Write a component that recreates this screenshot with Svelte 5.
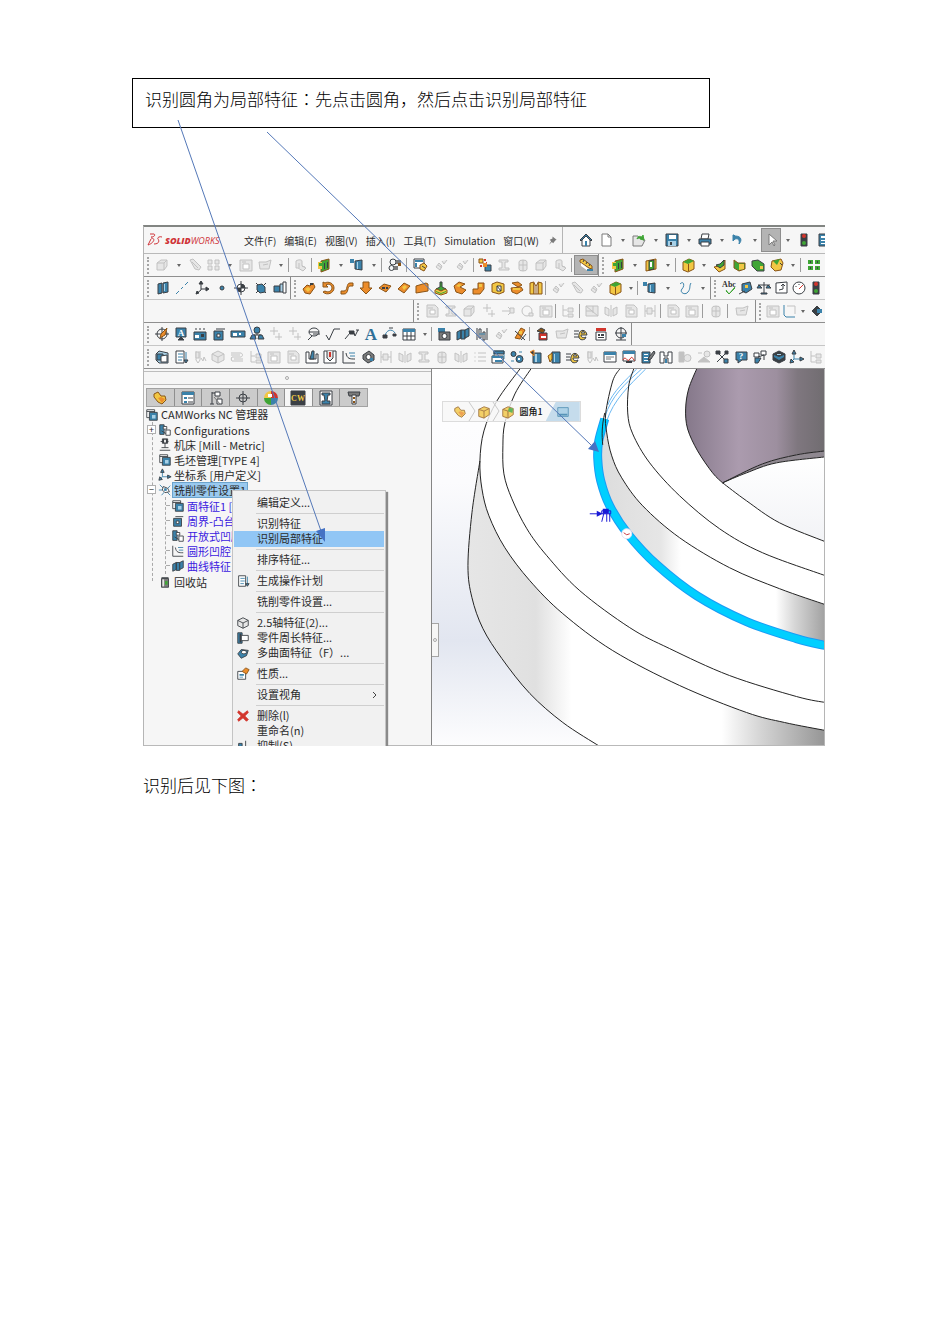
<script lang="ts">
  type Group = { span: number; edge?: 'grip' | 'line' | 'wall' | 'walled-grip'; items?: string };
  type Point = [number, number];

  const palette: Record<string, string> = {
    n: 'none', k: '#3a3f44', b: '#3b82aa', l: '#a8d0e6', o: '#ec8d2c', y: '#f2c744',
    g: '#3fa535', w: '#ffffff', s: '#c2c2c2', e: '#e6e6e6', t: '#7b7b7b', r: '#d2352c', d: '#8a5416'
  };

  // each part: fill letter, stroke letter, then path data on a 16px grid
  const icons: Record<string, string[]> = {
    home: ['bk M2 8l6-6 6 6-1 1-5-5-5 5z', 'wk M4 8v6h8V8L8 4z', 'bn M7 9h2v5H7z'],
    page: ['wt M4 2h6l3 3v9H4z', 'nt M10 2v3h3'],
    folder: ['et M2 4h5l1 2h4v2h2l-3 6H2z', 'gg M6 7c1-3 3-3 5-2l1-2 1 5-4-1 1-1c-2 0-3 0-4 1z'],
    save: ['bk M2 2h12v12H2z', 'wn M5 3h7v4H5z', 'ln M4 9h8v5H4z', 'kn M6 10h2v3H6z'],
    print: ['wk M5 2h7l-1 5H4z', 'bk M2 7h12v5H2z', 'wk M4 10h8v4H4z'],
    undo: ['bb M3 3v6l2-2c3-1 5 1 4 5 3-3 3-8-4-8l-1-1z'],
    cursor: ['wt M6 2v11l3-3 2 4 1-1-2-4h4z'],
    light: ['kk M5 2h6v12H5z', 'rn M6 4a2 2 0 1 0 4 0a2 2 0 1 0-4 0', 'gn M6 11a2 2 0 1 0 4 0a2 2 0 1 0-4 0'],
    list: ['bk M3 2h11v12H3z', 'wn M5 4h8v2H5zM5 8h8v1H5zM5 11h8v1H5z'],
    pin: ['tn M8 2l6 5-2 1-3 4-2-2-4 4 3-5-2-2 4-2z'],
    gBox: ['es M2 6l4-3h6v6l-3 4H2z', 'ns M2 6h7v7M9 6l3-3'],
    gClip: ['es M3 3l3-1 8 8-2 3-4-1z', 'ns M5 5l6 6'],
    gGrid: ['es M2 3h4v4H2zM9 3h4v4H9zM2 9h4v4H2zM9 9h4v4H9z'],
    gCam: ['es M2 3h12v11H2z', 'ws M5 7h6v5H5z', 'ns M4 5h4'],
    gFold: ['es M2 5h7l5-2-2 9H3z', 'ns M6 8l5-1'],
    gCyl: ['es M3 4c3-2 6-1 6 0v5l4 2-3 3-5-3H3z', 'ns M6 6v5M9 9l3 1'],
    gStar: ['es M3 10l3-4 3 3-2 4zM9 4l2 3 3-4', 'ns M5 8l4 3'],
    gBeam: ['es M3 3h9v2H9v6h4v2H3v-2h3V5H3z'],
    gDisc: ['es M4 5a4 2 0 0 1 8 0v7a4 2 0 0 1-8 0z', 'ns M4 8h8M8 3v11'],
    gPage: ['es M3 2h8l3 3v9H3z', 'ws M6 7h5v4H6z', 'ns M4 5h5'],
    gArrow: ['ns M2 8h10M8 4l4 4-4 4', 'es M10 5h4v5h-4z'],
    gRing: ['ns M3 8a5 5 0 1 0 10 0a5 5 0 1 0-10 0', 'es M10 10h4v3h-4z'],
    gPair: ['es M2 4l4 2v7l-4-2zM14 4l-4 2v7l4-2z', 'ns M8 2v12'],
    gDots: ['en M2 3h2v2H2zM2 7h2v2H2zM2 11h2v2H2z', 'ns M6 4h8M6 8h8M6 12h8'],
    gTree: ['ns M3 2v11h4M3 7h4', 'es M8 5h5v4H8zM8 11h5v3H8z'],
    gMill: ['ns M4 2v9l2 3 2-3V2M9 9l2 3 1-4 2 4', 'es M4 3h3v6H4z'],
    gHex: ['es M8 2l6 3v6l-6 3-6-3V5z', 'ns M2 5l6 3 6-3M8 8v6'],
    gWave: ['ns M2 4h10c2 1 2 3 0 4H3c-1 1-1 3 0 4h11', 'ns M2 6h9M5 10h9'],
    gSpan: ['ns M3 2v12M13 2v12M3 8h10', 'es M5 5h5v6H5z'],
    gSlash: ['es M2 3h12v10H2z', 'ns M2 3l12 10M2 8h7M9 3v7'],
    sel: ['gd M5 4l8-2v10l-8 3z', 'yn M2 5h4v7H2z', 'gn M3 6h3v3H3z', 'kn M8 6h1v6H8zM11 5h1v6h-1z'],
    gate: ['yd M3 4l10-2v10L3 14z', 'gk M6 4l5-1v9l-5 1z', 'wn M7 5h2v5H7z'],
    cube: ['yd M3 5l6-3 5 2v8l-6 3-5-2z', 'gn M3 5l6-3 5 2-6 3z', 'dn M8 7h1v7H8z'],
    wedge: ['yd M2 10l5-1 6-6v9l-6 3z', 'gk M4 8l4-1 4-4v5l-4 3z'],
    notch: ['gd M3 3l4 3h7v6l-6 2-5-3z', 'yn M8 7h5v5l-5 1z'],
    block: ['gk M2 4l6-1 6 4v7H7L2 9z', 'yn M10 9h3v3h-3z'],
    cutbox: ['yd M3 4l9-2 2 4-2 7-6 1-4-4z', 'gn M4 4l7-2-3 6z', 'kk M11 6l2 2'],
    nodes: ['gn M2 3h5v4H2zM9 3h5v4H9zM2 9h5v4H2zM9 9h5v4H9z', 'kn M4 4h1v2H4zM11 4h1v2h-1zM4 10h1v2H4zM11 10h1v2h-1z'],
    planeTag: ['bk M6 4l7-1v10l-7-1z', 'bn M1 2h4v4H1z', 'ln M8 5h1v7H8z'],
    gears: ['nk M3 5a3 3 0 1 0 6 0a3 3 0 1 0-6 0M2 11a2 2 0 1 0 5 0a2 2 0 1 0-5 0', 'tn M9 3h5v4H9zM7 9h4v4H7z', 'dn M11 6h3v3h-3z'],
    sheet: ['wk M2 2h10v9H2z', 'bn M3 3h8v2H3zM3 6h2v4H3z', 'yd M8 8l4-2 3 3-3 5-4-2z', 'kk M10 9l3 2'],
    swap: ['yd M2 2h4v4H2z', 'rn M7 2h2v2H7zM3 8h2v2H3zM9 5h1v2H9z', 'bk M8 8h6v6H8z', 'on M6 6h4v4H6z'],
    measure: ['yd M2 3l3-1 9 7v3l-3-1-9-6z', 'wn M3 6l8 6-1 2-7-5z', 'bn M9 12h6v2H9z', 'kk M5 5l1-2M8 7l1-2M11 9l1-2'],
    plane: ['bk M3 4l4-1v10l-4 1zM8 3l5-1v10l-5 1z', 'ln M9 4h1v7H9z'],
    dash: ['nb M2 14l3-3M7 9l2-2M11 5l3-3'],
    axes: ['nk M7 2v8l-5 4M7 9h7', 'kk M7 1l2 3H5zM15 9l-3-2v4zM2 14l1-3 2 2z'],
    dot: ['bk M6 8a2 2 0 1 0 4 0a2 2 0 1 0-4 0'],
    target: ['wk M4 8a4 4 0 1 0 8 0a4 4 0 1 0-8 0', 'kk M8 1v14M1 8h14', 'kn M8 4a4 4 0 0 1 4 4H8zM8 12a4 4 0 0 1-4-4h4z'],
    sight: ['nk M4 8a4 4 0 1 0 8 0a4 4 0 1 0-8 0M8 1v14M1 8h14'],
    burst: ['nk M3 3l2 2M13 3l-2 2M3 13l2-2M13 13l-2-2', 'bk M4 5l5-1 3 3v5l-5 1-3-3z'],
    pipe: ['bk M2 6h6v6H2z', 'lk M8 4h4v8H8z', 'wk M11 2h3v11h-3z'],
    boss: ['od M2 9l4-4 3 1 3-3 2 4-5 7-5-1z', 'yn M4 9l3-2 3 2-3 3z', 'kn M9 3h3v2H9z'],
    revolve: ['od M3 2v5h5L6 5c3-2 6 0 6 3s-4 5-7 3l-2 1c4 4 11 1 11-4S8 1 5 3z'],
    sweep: ['od M2 11h3c4 0 2-8 6-8h3v3h-3c-3 0-1 8-6 8H2z'],
    down: ['od M5 2h6v6h3l-6 6-6-6h3z'],
    loft: ['od M2 8l5-4 7 2-5 6z', 'kn M5 7h3v2H5zM9 7h2v2H9z'],
    loft2: ['od M2 9l6-6 6 3-6 7z', 'yn M6 7l3-2 2 2-3 3z'],
    sheetO: ['od M2 6l10-3 2 1v7L2 13z'],
    green: ['gk M7 2h2v5l4 2-5 2-5-2 4-2z', 'yd M2 10l2-1 4 2 4-2 2 1v3l-6 2-6-2z', 'gn M3 11l5 2 5-2v1l-5 2-5-2z'],
    slab: ['od M2 6l5-4 6 2-5 3 6 3-4 4-6-2z', 'yn M4 6l3-2 3 1-3 2z'],
    elbow: ['od M2 9h5V3h6v6l-4 5H2z', 'yn M8 4h3v3H8z'],
    cage: ['yd M2 4l5-2 7 2v8l-5 2-7-2z', 'wk M7 6h4v5H7z', 'kk M7 6l4 5'],
    stack: ['od M3 3l6-1 4 3-4 2zM2 8l10-1 2 3-6 4-5-2z', 'yn M4 8h7v2H4z'],
    jacket: ['yd M2 3l4-1v12H2zM14 3l-4-1v12h4z', 'wd M6 3l2 3 2-3v11H6z', 'nd M8 6v8'],
    surface: ['nb M3 4c4-4 5 2 2 5s3 7 6 3 1-6 3-9'],
    abc: ['ng M5 10l3 4 6-7', 'ng M5 11l3 3 6-6'],
    tape: ['bk M4 4l8-2 2 7-6 4-4-2z', 'yn M7 5h3v3H7z', 'nk M1 14l6-3'],
    scale: ['nk M8 2v11M2 5h12', 'bk M1 8l2-3 3 3zM10 8l2-3 3 3zM5 13h6v1H5z'],
    note: ['wk M3 3l11-1v11H3z', 'nk M6 10l4-1V5M8 6l2-2 2 2'],
    gauge: ['wk M2 8a6 6 0 1 0 12 0a6 6 0 1 0-12 0', 'nr M8 9l4-4', 'nk M5 6v1M8 4v1'],
    corner: ['nb M3 2v10l2 2h9', 'ns M6 3h8v8'],
    knob: ['kk M3 8l5-5 5 5-5 5z', 'bn M8 6h5v4H8z'],
    compass: ['nk M3 8a5 5 0 1 0 10 0a5 5 0 1 0-10 0M8 1v14M1 8h14', 'od M7 8l6-6-2 7-5 3z'],
    noteA: ['bk M3 2h10v9H3z', 'kk M5 14h6l-3-3z'],
    stampA: ['nk M3 3h2M7 3h2M11 3h2', 'bk M2 6h12v8H2z', 'wn M3 9h4v3H3z', 'kn M9 8h3v3H9z'],
    stampB: ['nk M5 3h9', 'bk M3 5h9v9H3z', 'wk M6 8h3v3H6z'],
    tag: ['bk M1 5h14v6H1z', 'wn M3 7h4v3H3zM9 7h2v2H9z'],
    people: ['bk M5 4a3 3 0 1 1 6 0l-1 3H6z', 'nk M8 7v2M4 9h8', 'bk M1 13l2-4h3l1 4zM9 13l1-4h3l2 4z'],
    gPlus: ['ns M2 5h8M6 1v8M7 11h7M11 7v7'],
    zoomE: ['nk M3 6a5 4 0 1 0 10 0a5 4 0 1 0-10 0M3 6h10M6 10l-4 4M7 8h7'],
    tick: ['nk M1 9l3 5L9 3h6'],
    weld: ['nk M1 13l5-6h4l1 3 3-6', 'kk M5 5h5v3H6zM12 4h3'],
    bigA: [],
    probe: ['nb M3 10c1-6 7-8 10-3', 'kk M1 9h4v3H1zM11 8h3v2h-3z', 'nk M7 2h4'],
    table: ['wk M2 3h12v11H2z', 'bn M2 3h12v3H2z', 'nk M2 10h12M6 6v8M10 6v8'],
    camera: ['bn M2 2h7v4H2z', 'tk M3 6h11v8H3z', 'wk M6 10a2 2 0 1 0 5 0a2 2 0 1 0-5 0'],
    books: ['bk M2 6l4-2v8l-4 2zM6 4h4v9H6z', 'bk M10 4l4-2v8l-4 2z'],
    align: ['nk M3 2v12M13 2v12', 'wk M5 3h2v9H5zM9 6h2v8H9z', 'nb M5 8h6'],
    brush: ['od M3 12L9 2l4 2-5 9z', 'nk M3 5l10 9M9 14l5-6', 'yn M7 5h3v3H7z'],
    hardhat: ['rk M5 7h8v7H5z', 'dk M3 5l4-3 4 2-2 3z', 'wn M7 10h5v2H7z'],
    swoosh: ['nk M1 5h5M1 8h4M1 11h5', 'yk M14 9H8c0 3 3 3 5 2l-1 2c-4 2-7 0-6-5s7-5 8 1zM8 7h4c-1-2-3-2-4 0z'],
    abcRed: ['rn M3 2h10v3H3z', 'wk M3 6h10v8H3z', 'kn M5 8h2v2H5zM8 8h3v2H8zM5 11h6v1H5z'],
    datum: ['nk M3 7a5 5 0 1 0 10 0a5 5 0 1 0-10 0M8 1v13M2 7h12M3 14h10', 'bn M9 8h4v3H9z'],
    stock: ['lk M2 5l3-3 9 2v10H5l-3-3z', 'bk M3 5h6v6H3z', 'wk M7 7l6-1v7H7z'],
    setup: ['wk M3 2h8v12H3z', 'nb M5 5h5M5 8h5M5 11h4M13 3v9', 'bk M11 11l2 3 2-3z'],
    pocket: ['wk M2 3h3v7h7V5h2v9H2z', 'bk M8 2h2v8H6z'],
    slot: ['wk M2 2h12v12H2z', 'ek M5 2v7l3 3 3-3V2', 'rn M7 3h2v5H7z'],
    curve: ['nk M2 2v12h12', 'nk M5 4c1 6 4 6 9 6', 'nb M8 4h6M9 7h5'],
    roll: ['tk M3 6l6-4 5 4v5l-6 3-5-4z', 'wk M6 8a2 2 0 1 0 5 0a2 2 0 1 0-5 0', 'bn M10 9h3v3h-3z'],
    windows: ['wb M4 2h10v8H4z', 'bk M4 2h10v3H4z', 'wk M2 7h11v7H2z', 'bn M2 7h11v2H2zM5 11h7v2H5z'],
    cogs: ['bk M2 5a2 2 0 1 0 5 0a2 2 0 1 0-5 0M7 10a3 3 0 1 0 7 0a3 3 0 1 0-7 0', 'nb M2 12h3M10 3h3', 'wn M9 9h2v2H9z'],
    barrel: ['bk M5 4h8v10H5z', 'ln M7 5h2v8H7z', 'ko M2 3l4-2v6z'],
    barrelL: ['bk M6 3h8v11H6z', 'ln M8 5h1v8H8z', 'yd M2 7l4-3v6l-2 3z'],
    dialog: ['wk M2 3h12v10H2z', 'bn M2 3h12v3H2z', 'nt M4 8h8M4 10h5'],
    chart: ['wk M2 2h12v10H2z', 'bn M2 2h12v3H2z', 'nr M2 11c3-6 4 4 7-1s3 3 5 1', 'kn M5 12h6v2H5z'],
    pens: ['bk M2 3h8v11H2z', 'wn M4 5h4v1H4zM4 8h4v1H4zM4 11h4v1H4z', 'tk M14 2L9 8l-1 3 3-1 4-6z'],
    clamp: ['wk M2 3h4v4h4V3h4v11h-4V9H6v5H2z', 'bn M7 10h2v4H7z'],
    gSphere: ['ss M2 3h5v10H2z', 'es M7 9a3 3 0 1 0 7 0a3 3 0 1 0-7 0'],
    gBall: ['ss M2 13l6-5 6 5z', 'es M8 5a3 3 0 1 0 6 0a3 3 0 1 0-6 0M2 4h4'],
    tools: ['nk M3 3l10 10M13 3L3 13', 'kk M2 2h4v3H2zM11 2h3v3h-3z', 'bk M10 10h4v4h-4z'],
    help: ['bk M3 3h11v8H9l-4 3v-3H3z'],
    robot: ['wk M2 4h5v4H2zM9 2h5v4H9z', 'bk M3 9h6l-3 5H3z', 'nk M6 8l6-2v5'],
    hexBlue: ['kk M8 2l6 3v6l-6 3-6-3V5z', 'bn M3 6l5 2 5-2v2L8 11 3 8z', 'ln M6 5h4v1H6z'],
    triad: ['nb M5 3v7l-3 3M5 10h8', 'bk M5 1l2 4H3zM15 10l-4-2v4zM1 14l1-4 3 3z'],
    part: ['yd M2 4l4-2 3 4h4l1 4-4 4-4-2-4-5z', 'on M6 8l3-1 4 2-3 4z'],
    props: ['wk M2 2h12v12H2z', 'bn M2 2h12v3H2zM4 7h3v2H4zM4 11h3v2H4z', 'nk M8 8h5M8 12h5'],
    config: ['nk M4 2v12M4 3h4M2 14h4', 'wk M7 2h5v4H7zM9 9h5v5H9z', 'nt M6 7l6 7M10 6v3'],
    configTree: ['bk M2 2h5v11H2z', 'wk M6 4h4v3H6zM9 8h5v6H9z', 'nk M4 9l5 3'],
    ball: ['rn M8 8V1a7 7 0 0 1 7 7z', 'bn M8 8h7a7 7 0 0 1-7 7z', 'gn M8 8v7a7 7 0 0 1-7-7z', 'yn M8 8H1a7 7 0 0 1 7-7z', 'wn M5 4h4v3H5z'],
    cw: ['kk M1 1h14v14H1z'],
    beam: ['wk M2 1h12v14H2z', 'bk M4 3h8v2h-2l-1 6h3v3H4v-3h3L6 5H4z'],
    filter: ['tk M2 2h12l-1 4H3z', 'wk M6 5h4v9H6z', 'dn M7 7h2v2H7zM7 11h2v2H7z'],
    camTree: ['wk M2 2h9v9H2z', 'bk M5 5h9v9H5z', 'ln M8 8h4v4H8z', 'nk M2 4h9'],
    machine: ['nk M2 14h12M4 11h8M8 4v7M3 4h9', 'kk M5 1h6v5H5z', 'wn M7 2h2v3H7z'],
    millset: ['nb M2 2l12 12M14 3L4 14M1 8h4', 'wk M6 4l5 2 2 4-5 1-3-3z', 'bn M7 6h3v3H7z'],
    bin: ['tk M4 4h8v10H4z', 'en M5 5h2v8H5z', 'gn M8 7h3v4H8z', 'nk M4 3h8'],
    hexGray: ['ek M2 5l6-3 6 3v6l-6 3-6-3z', 'nk M2 5l6 3 6-3M8 8v6'],
    perimeter: ['bk M2 2h5v12H2z', 'wk M6 5h8v6H6z', 'kn M4 3h2v10H4z'],
    multi: ['bk M2 9l4-5 8 1-2 6-6 3z', 'wk M6 7a3 2 0 1 0 6 0a3 2 0 1 0-6 0'],
    propHand: ['wk M2 5h9v9H2z', 'bn M4 8h5v2H4zM4 11h4v1H4z', 'od M7 5l4-4 4 2-3 5z'],
    cross: ['rr M3 2l5 4 5-4 1 2-4 4 4 4-2 2-4-4-5 4-1-2 4-4-4-4z'],
    suppress: ['bk M3 5h4v9H3z', 'kk M11 2v10M8 9l3 4 3-4z'],
    solid: ['yd M2 5l6-3 6 2v7l-6 4-6-2z', 'nd M2 5l6 2 6-3M8 7v8'],
    fillet: ['yd M2 5l6-3 6 2v7l-6 4-6-2z', 'nd M2 5l6 2v8', 'gn M8 7l1-4 5 1-1 5z'],
    face: ['lb M2 3h12v10H2z', 'bn M3 10h10v2H3z']
  };

  const letters: Record<string, { text: string; size: number; x: number; y: number; fill: string }> = {
    abc: { text: 'Abc', size: 8, x: 8, y: 7, fill: '#333' },
    noteA: { text: 'A', size: 9, x: 8, y: 10, fill: '#fff' },
    bigA: { text: 'A', size: 17, x: 8, y: 14, fill: '#2f6f98' },
    help: { text: '?', size: 9, x: 8, y: 10, fill: '#fff' },
    cw: { text: 'CW', size: 8, x: 8, y: 11, fill: '#f2c744' }
  };

  const menus = ['文件(F)', '编辑(E)', '视图(V)', '插入(I)', '工具(T)', 'Simulation', '窗口(W)'];
  const quick = 'home page dd folder dd save dd print dd undo dd *cursor dd light list';

  const rowSpan = 681;
  const toolbars: Group[][] = [
    [
      { span: 144, edge: 'grip', items: 'gBox dd gClip gGrid dd gCam gFold dd' },
      { span: 23, edge: 'line', items: 'gCyl' },
      { span: 70, edge: 'line', items: 'sel dd planeTag dd' },
      { span: 25, edge: 'line', items: 'gears' },
      { span: 67, edge: 'line', items: 'sheet gStar gStar' },
      { span: 98, edge: 'line', items: 'swap gBeam gDisc gBox gCyl' },
      { span: 27, edge: 'line', items: '*measure' },
      { span: 77, edge: 'walled-grip', items: 'sel dd gate dd' },
      { span: 125, edge: 'line', items: 'cube dd wedge notch block cutbox dd' },
      { span: 25, edge: 'line', items: 'nodes' }
    ],
    [
      { span: 146, edge: 'grip', items: 'plane dash axes dot target burst pipe' },
      { span: 255, edge: 'walled-grip', items: 'boss revolve sweep down loft loft2 sheetO green slab elbow cage stack jacket' },
      { span: 92, edge: 'line', items: 'gStar gClip gStar cube dd' },
      { span: 73, edge: 'line', items: 'planeTag dd surface dd' },
      { span: 115, edge: 'walled-grip', items: 'abc tape scale note gauge light' }
    ],
    [
      { span: 269 },
      { span: 142, edge: 'walled-grip', items: 'gPage gBeam gBox gPlus gArrow gRing gCam' },
      { span: 24, edge: 'line', items: 'gTree' },
      { span: 81, edge: 'line', items: 'gSlash gPair gPage gSpan' },
      { span: 42, edge: 'line', items: 'gPage gCam' },
      { span: 25, edge: 'line', items: 'gDisc' },
      { span: 28, edge: 'line', items: 'gFold' },
      { span: 70, edge: 'walled-grip', items: 'gCam corner dd knob' }
    ],
    [
      { span: 287, edge: 'grip', items: 'compass noteA stampA stampB tag people gPlus gPlus zoomE tick weld bigA probe table dd' },
      { span: 98, edge: 'line', items: 'camera books align gStar brush' },
      { span: 102, edge: 'line', items: 'hardhat gFold swoosh abcRed datum' },
      { span: 194, edge: 'wall' }
    ],
    [
      {
        span: 681,
        edge: 'grip',
        items:
          'stock setup gMill gHex gWave gTree gCam gPage pocket slot curve roll gSpan gPair gBeam gDisc gPair gDots ' +
          'windows cogs barrel barrelL swoosh gMill dialog chart pens clamp gSphere gBall tools help robot hexBlue triad gTree'
      }
    ]
  ];

  const tabs = ['part', 'props', 'config', 'sight', 'ball', 'cw', 'beam', 'filter'];

  const tree = [
    { icon: 'configTree', label: 'Configurations', sign: '+' },
    { icon: 'machine', label: '机床 [Mill - Metric]' },
    { icon: 'camTree', label: '毛坯管理[TYPE 4]' },
    { icon: 'triad', label: '坐标系 [用户定义]' },
    {
      icon: 'millset', label: '铣削零件设置1', sign: '−', selected: true,
      children: ['面特征1 [默认]', '周界-凸台1', '开放式凹腔1', '圆形凹腔1', '曲线特征1']
    },
    { icon: 'bin', label: '回收站' }
  ];
  const featureIcons = ['camTree', 'stampB', 'configTree', 'curve', 'books'];

  const contextMenu = [
    [{ label: '编辑定义...' }],
    [{ label: '识别特征' }, { label: '识别局部特征', active: true }],
    [{ label: '排序特征...' }],
    [{ label: '生成操作计划', icon: 'setup' }],
    [{ label: '铣削零件设置...' }],
    [
      { label: '2.5轴特征(2)...', icon: 'hexGray' },
      { label: '零件周长特征...', icon: 'perimeter' },
      { label: '多曲面特征（F）...', icon: 'multi' }
    ],
    [{ label: '性质...', icon: 'propHand' }],
    [{ label: '设置视角', sub: true }],
    [{ label: '删除(l)', icon: 'cross' }, { label: '重命名(n)' }, { label: '抑制(S)', icon: 'suppress' }]
  ];

  const rimOuter: Point[] = [[520, 368], [497, 400], [484, 430], [480, 460], [482, 488], [489, 515], [505, 547], [530, 580], [563, 613], [613, 650], [680, 685], [747, 712], [785, 722], [826, 730]];
  const rimInner: Point[] = [[531, 368], [515, 393], [505, 422], [503, 445], [504, 473], [512, 498], [527, 528], [547, 555], [580, 590], [630, 627], [670, 648], [730, 675], [797, 696], [826, 702]];
  const silhouette: Point[] = [[480, 460], [472, 512], [468, 565], [472, 597], [483, 628], [502, 658], [530, 693], [563, 722], [600, 746]];
  const fillet: Point[] = [[605, 418], [599, 440], [598, 458], [601, 480], [610, 505], [628, 533], [657, 564], [697, 595], [747, 621], [797, 638], [826, 645]];
  const bossEdge: Point[] = [[620, 368], [613, 380], [606, 412], [607, 432], [612, 455], [622, 477], [643, 505], [680, 537], [730, 567], [780, 588], [826, 604]];
  const bossTop: Point[] = [[634, 368], [629, 385], [628, 412], [633, 433], [650, 462], [680, 495], [720, 528], [763, 552], [826, 575]];
  const bore: Point[] = [[697, 368], [689, 388], [686, 408], [688, 428], [698, 450], [713, 472], [723, 482]];
  const boreLow: Point[] = [[723, 482], [747, 500], [780, 522], [826, 541]];
  const boreFloor: Point[] = [[723, 482], [763, 463], [797, 454], [826, 450]];
  const boreFloorLow: Point[] = [[723, 482], [747, 472], [777, 462], [826, 456]];

  // Catmull-Rom spline through the points, written as cubic segments
  function spline(pts: Point[], start = 'M') {
    let d = `${start}${pts[0][0]} ${pts[0][1]}`;
    for (let i = 0; i < pts.length - 1; i++) {
      const p0 = pts[i - 1] ?? pts[i];
      const p1 = pts[i];
      const p2 = pts[i + 1];
      const p3 = pts[i + 2] ?? p2;
      d += `C${p1[0] + (p2[0] - p0[0]) / 6} ${p1[1] + (p2[1] - p0[1]) / 6} ${p2[0] - (p3[0] - p1[0]) / 6} ${p2[1] - (p3[1] - p1[1]) / 6} ${p2[0]} ${p2[1]}`;
    }
    return d;
  }

  const outerWall = spline(silhouette) + 'L826 746' + spline(rimOuter.slice(3).reverse(), 'L') + 'z';
  const topFace = spline(rimOuter) + 'L826 368z';
  const bossWall = spline(fillet) + spline(bossEdge.slice(2).reverse(), 'L') + 'z';
  const boreWall = spline(bore) + spline(boreFloor, 'L') + 'L826 368z';
  const boreLedge = spline(boreFloor) + spline([...boreFloorLow].reverse(), 'L') + 'z';
  const boreBottom = spline(boreFloorLow) + spline([...boreLow].reverse(), 'L') + 'z';
  const edges = [rimOuter, rimInner, silhouette, bossEdge, bossTop, bore, boreLow, boreFloor, boreFloorLow];
</script>

{#snippet icon(name: string)}
  <svg class="icon" viewBox="0 0 16 16" aria-hidden="true">
    {#each icons[name] as part}
      <path fill={palette[part[0]]} stroke={palette[part[1]]} d={part.slice(3)} />
    {/each}
    {#if letters[name]}
      {@const mark = letters[name]}
      <text x={mark.x} y={mark.y} font-size={mark.size} fill={mark.fill} text-anchor="middle">{mark.text}</text>
    {/if}
  </svg>
{/snippet}

{#snippet tools(items: string)}
  {#each items.split(' ') as item}
    {#if item === 'dd'}
      <button class="drop" aria-label="more"></button>
    {:else}
      <button class="tool" class:on={item[0] === '*'} aria-label={item.replace('*', '')}>
        {@render icon(item.replace('*', ''))}
      </button>
    {/if}
  {/each}
{/snippet}

<main class="sheet">
  <p class="callout">识别圆角为局部特征<span class="colon">：</span>先点击圆角，然后点击识别局部特征</p>

  <section class="window">
    <header class="menubar">
      <div class="brand">
        <svg class="mark" viewBox="0 0 16 14" aria-hidden="true">
          <path d="M3 1h4c2 1 0 3-3 3M4 5c5 0 3 5-3 7l3-6" />
          <path d="M15 4c-3-1-5 1-4 2s2 5-4 5" />
        </svg>
        <b>SOLID</b><span>WORKS</span>
      </div>
      <nav>
        {#each menus as label}
          <button>{label}</button>
        {/each}
        {@render icon('pin')}
      </nav>
      <div class="quick">{@render tools(quick)}</div>
    </header>

    {#each toolbars as groups}
      <div class="toolbar">
        {#each groups as group}
          <div class="group {group.edge ?? ''}" style="width: {(group.span / rowSpan) * 100}%">
            {#if group.items}{@render tools(group.items)}{/if}
          </div>
        {/each}
      </div>
    {/each}

    <div class="work">
      <aside class="panel">
        <div class="splitter"><i></i></div>
        <div class="tabs">
          {#each tabs as tab}
            <button aria-label={tab} class:current={tab === 'cw'}>{@render icon(tab)}</button>
          {/each}
        </div>

        <div class="root">{@render icon('camTree')}CAMWorks NC 管理器</div>
        <ul class="tree">
          {#each tree as node}
            <li>
              <div class="node">
                <span class="sign" class:boxed={node.sign}>{node.sign ?? ''}</span>
                {@render icon(node.icon)}
                <span class="name" class:selected={node.selected}>{node.label}</span>
              </div>
              {#if node.children}
                <ul class="features">
                  {#each node.children as child, i}
                    <li class="node">{@render icon(featureIcons[i])}<span class="name">{child}</span></li>
                  {/each}
                </ul>
              {/if}
            </li>
          {/each}
        </ul>

        <div class="context">
          {#each contextMenu as section}
            <div class="section">
              {#each section as item}
                <button class:active={item.active}>
                  <span class="slot">{#if item.icon}{@render icon(item.icon)}{/if}</span>
                  {item.label}
                  {#if item.sub}<svg class="chevron" viewBox="0 0 6 8"><path d="M1 1l3 3-3 3" /></svg>{/if}
                </button>
              {/each}
            </div>
          {/each}
        </div>
      </aside>

      <div class="viewport">
        <svg class="model" viewBox="432 368 393 378" preserveAspectRatio="xMinYMin slice" role="img" aria-label="圆角1">
          <defs>
            <linearGradient id="sky" x1="0" y1="0" x2="0" y2="1">
              <stop offset="0" stop-color="#ffffff" />
              <stop offset="0.3" stop-color="#fbfbfd" />
              <stop offset="0.72" stop-color="#e2e6f0" />
              <stop offset="1" stop-color="#fdfdfe" />
            </linearGradient>
            <linearGradient id="outer" gradientUnits="userSpaceOnUse" x1="468" y1="0" x2="826" y2="0">
              <stop offset="0" stop-color="#e6e6e6" />
              <stop offset="0.19" stop-color="#e0e0e0" />
              <stop offset="0.29" stop-color="#ffffff" />
              <stop offset="0.71" stop-color="#ffffff" />
              <stop offset="0.82" stop-color="#d4d4d4" />
              <stop offset="1" stop-color="#959595" />
            </linearGradient>
            <linearGradient id="boss" gradientUnits="userSpaceOnUse" x1="600" y1="0" x2="826" y2="0">
              <stop offset="0" stop-color="#dcdcdc" />
              <stop offset="0.27" stop-color="#e6e6e6" />
              <stop offset="0.36" stop-color="#ffffff" />
              <stop offset="0.78" stop-color="#ffffff" />
              <stop offset="0.86" stop-color="#d8d8d8" />
              <stop offset="1" stop-color="#a0a0a0" />
            </linearGradient>
            <linearGradient id="bore" gradientUnits="userSpaceOnUse" x1="686" y1="0" x2="826" y2="0">
              <stop offset="0" stop-color="#85788a" />
              <stop offset="0.38" stop-color="#ab9bae" />
              <stop offset="0.65" stop-color="#9d8f9f" />
              <stop offset="0.8" stop-color="#7f777f" />
              <stop offset="1" stop-color="#706c70" />
            </linearGradient>
            <linearGradient id="floor" x1="0" y1="0" x2="0" y2="1">
              <stop offset="0" stop-color="#ffffff" />
              <stop offset="1" stop-color="#f2f3f6" />
            </linearGradient>
          </defs>
          <rect x="432" y="368" width="393" height="378" fill="url(#sky)" />
          <path d={topFace} fill="#fff" />
          <path d={outerWall} fill="url(#outer)" />
          <path d={bossWall} fill="url(#boss)" />
          <path d={boreWall} fill="url(#bore)" />
          <path d={boreLedge} fill="#8f8890" />
          <path d={boreBottom} fill="url(#floor)" />
          <g class="ghost">
            <path d="M605 416C612 395 624 384 642 368" />
            <path d="M607 420C614 399 628 386 646 368" />
            <path d="M608 404C613 391 626 379 637 368" />
          </g>
          <path class="fillet-rim" d={spline(fillet)} />
          <path class="fillet" d={spline(fillet)} />
          {#each edges as pts}
            <path class="edge" d={spline(pts)} />
          {/each}
          <path class="edge" d="M605 412C602 425 602 434 603 444" />
          <path class="cue" d="M590 513h9M602 510h9v3h-9zM604 513l-2 8M607 513v8M610 513v8" />
          <path class="cue-head" d="M597 510l6 3-6 3zM603 508h6v5h-6z" />
          <circle cx="627" cy="533" r="5" fill="#fff" stroke="#e6dff2" />
          <path d="M624 532l3 2 3-1" fill="none" stroke="#c9404a" />
        </svg>
        <div class="crumbs">
          {@render icon('part')}
          <svg class="wedge-mark" viewBox="0 0 8 19"><path d="M1 0l6 9L1 19" /></svg>
          {@render icon('solid')}
          <svg class="wedge-mark" viewBox="0 0 8 19"><path d="M1 0l6 9L1 19" /></svg>
          {@render icon('fillet')}
          <span>圆角1</span>
          <div class="picked">{@render icon('face')}</div>
        </div>
        <button class="handle" aria-label="collapse"><i></i></button>
      </div>
    </div>
  </section>

  <p class="after">识别后见下图<span class="colon">：</span></p>

  <svg class="pointers" aria-hidden="true">
    <path class="line" d="M178 120L321 531M267 132L591 445" />
    <path class="head" d="M325 542l-9-11 9-3zM599 452l-11-3 7-8z" />
  </svg>
</main>

<style>
  :global(body) {
    margin: 0;
    background: #fff;
  }

  .sheet {
    position: relative;
    box-sizing: border-box;
    min-height: 1344px;
    padding: 78px 125px 0 143px;
    font-family: 'Noto Sans CJK SC', sans-serif;
    color: #000;
  }

  p {
    margin: 0;
    font-size: 17px;
    line-height: 24px;
    font-weight: 300;
  }

  .colon {
    font-family: 'Noto Sans CJK JP', sans-serif;
  }

  .callout {
    box-sizing: border-box;
    min-height: 50px;
    margin: 0 115px 97px -11px;
    padding: 8px 12px;
    border: 1px solid #000;
  }

  .after {
    margin-top: 27px;
  }

  button {
    margin: 0;
    padding: 0;
    border: 0;
    background: none;
    font: inherit;
    color: inherit;
    text-align: left;
  }

  .icon {
    flex: none;
    display: block;
    width: 16px;
    height: 16px;
    overflow: visible;
    stroke-width: 1;
  }

  .icon text {
    font-family: 'Liberation Serif', serif;
    font-weight: bold;
  }

  /* application window */
  .window {
    overflow: hidden;
    border-top: 2px solid #828582;
    border-left: 1px solid #b5b5b5;
    background: #f6f6f6;
    font-size: 11px;
    line-height: 15px;
    color: #2b2b2b;
  }

  .menubar {
    display: flex;
    box-sizing: border-box;
    height: 27px;
    border-bottom: 1px solid #b9b9b9;
  }

  .brand {
    display: flex;
    align-items: center;
    flex: 0 0 100px;
    padding-left: 3px;
    box-sizing: border-box;
    font: italic 9px 'Open Sans', sans-serif;
    color: #cf3338;
  }

  .brand b {
    font-weight: 800;
  }

  .mark {
    width: 16px;
    height: 14px;
    margin-right: 2px;
    fill: none;
    stroke: #cf3338;
    stroke-width: 1;
  }

  nav {
    display: flex;
    align-items: center;
    justify-content: space-between;
    flex: 1 0 0;
    box-sizing: border-box;
    min-width: 0;
    padding-right: 4px;
    font-size: 10px;
    white-space: nowrap;
  }

  nav .icon {
    width: 11px;
    height: 11px;
  }

  .quick {
    display: flex;
    align-items: center;
    flex: none;
    width: 263px;
    box-sizing: border-box;
    padding-left: 13px;
    border-left: 1px solid #b5b5b5;
    overflow: hidden;
  }

  .quick > :global(.tool) {
    flex: 0 0 20px;
  }

  .quick > :global(.drop) {
    flex: 0 0 13px;
  }

  .quick > :global(.on) {
    height: 24px;
  }

  .toolbar {
    display: flex;
    box-sizing: border-box;
    height: 23px;
    border-bottom: 1px solid #c6c6c6;
  }

  .toolbar:nth-of-type(odd) {
    border-bottom-color: #8f8f8f;
  }

  .group {
    position: relative;
    display: flex;
    align-items: center;
    flex: none;
    box-sizing: border-box;
    padding-left: 3px;
  }

  .group.grip,
  .group.walled-grip {
    padding-left: 9px;
  }

  .group.grip::before,
  .group.walled-grip::before {
    content: '';
    position: absolute;
    left: 3px;
    top: 3px;
    bottom: 2px;
    border-left: 2px dotted #a5a5a5;
  }

  .group.line::before {
    content: '';
    position: absolute;
    left: 0;
    top: 4px;
    bottom: 4px;
    border-left: 1px solid #9c9c9c;
  }

  .group.wall,
  .group.walled-grip {
    border-left: 1px solid #8c8c8c;
  }

  .tool {
    display: flex;
    align-items: center;
    justify-content: center;
    flex: 19 1 0;
    min-width: 0;
    height: 20px;
  }

  .tool.on {
    background: #b4b4b4;
    box-shadow: inset 0 0 0 1px #8e8e8e;
  }

  .drop {
    flex: 13 1 0;
    height: 20px;
  }

  .drop::before {
    content: '';
    display: block;
    width: 0;
    margin: 0 auto;
    border: 2px solid transparent;
    border-top: 3px solid #666;
    border-bottom: 0;
  }

  /* feature manager */
  .work {
    display: flex;
    height: 376px;
    border-bottom: 1px solid #b9b9b9;
  }

  .panel {
    position: relative;
    flex: 287 0 0;
    border-right: 1px solid #858585;
  }

  .splitter {
    display: flex;
    align-items: center;
    justify-content: center;
    height: 12px;
    margin-top: 2px;
    border: solid #bdbdbd;
    border-width: 1px 0;
  }

  .splitter i,
  .handle i {
    width: 2px;
    height: 2px;
    border: 1px solid #a9a9a9;
    border-radius: 50%;
  }

  .tabs {
    display: flex;
    width: 222px;
    margin: 3px 0 0 2px;
    border: 1px solid #a2a2a2;
    box-sizing: border-box;
  }

  .tabs button {
    display: flex;
    justify-content: center;
    align-items: center;
    flex: 1;
    height: 17px;
    border-right: 1px solid #8f8f8f;
    background: #cbcbcb;
  }

  .tabs button:last-child {
    border-right: 0;
  }

  .tabs .current {
    background: #f6f6f6;
  }

  .root,
  .node {
    display: flex;
    align-items: center;
    height: 15px;
    white-space: nowrap;
  }

  .root {
    gap: 2px;
    padding-left: 1px;
  }

  .root .icon {
    width: 14px;
    height: 14px;
  }

  ul {
    margin: 0;
    padding: 0;
    list-style: none;
  }

  .tree {
    position: relative;
    padding-left: 4px;
  }

  .tree::before {
    content: '';
    position: absolute;
    left: 8px;
    top: 0;
    bottom: 8px;
    border-left: 1px dashed #a9a9a9;
  }

  .node {
    gap: 1px;
  }

  .node .icon {
    width: 14px;
    height: 14px;
  }

  .name {
    padding: 0 1px;
    line-height: 14px;
  }

  .selected {
    background: #99c9ef;
    outline: 1px solid #6ba3cc;
  }

  .sign {
    position: relative;
    width: 9px;
    height: 7px;
    font-size: 9px;
    line-height: 7px;
    text-align: center;
  }

  .boxed {
    width: 7px;
    margin-right: 2px;
    background: #fff;
    box-shadow: 0 0 0 1px #b0b0b0;
  }

  .features {
    margin-left: 17px;
    padding: 1px 0;
    border-left: 1px dashed #a9a9a9;
    color: #3a20e0;
  }

  .features .node::before {
    content: '';
    width: 4px;
    border-top: 1px dashed #a9a9a9;
  }

  .context {
    position: absolute;
    left: 88px;
    top: 121px;
    width: 150px;
    padding: 4px 1px;
    border: 1px solid #c4c4c4;
    background: #f1f1f1;
    box-shadow: 2px 2px 1px #8a8a8a;
  }

  .section + .section {
    margin-top: 3px;
    padding-top: 3px;
    background: linear-gradient(#cfcfcf, #cfcfcf) 22px 0 / 100% 1px no-repeat;
  }

  .context button {
    display: flex;
    align-items: center;
    width: 100%;
    height: 15px;
    white-space: nowrap;
  }

  .context .active {
    background: #91c6f5;
    box-shadow: 0 1px #91c6f5;
  }

  .slot {
    width: 19px;
    margin-right: 4px;
    padding-left: 2px;
    box-sizing: border-box;
  }

  .slot .icon {
    width: 14px;
    height: 14px;
  }

  .chevron {
    width: 6px;
    height: 8px;
    margin: 0 6px 0 auto;
    fill: none;
    stroke: #444;
  }

  /* graphics area */
  .viewport {
    position: relative;
    flex: 393 0 0;
    overflow: hidden;
    border-right: 1px solid #b5b5b5;
  }

  .model {
    display: block;
    width: 100%;
    height: 100%;
  }

  .edge {
    fill: none;
    stroke: #222;
    stroke-width: 1;
  }

  .fillet,
  .fillet-rim,
  .ghost {
    fill: none;
    stroke: #00cfff;
    stroke-width: 7;
  }

  .fillet-rim {
    stroke: #1a9cf5;
    stroke-width: 9;
  }

  .ghost {
    stroke: #6ab8f2;
    stroke-width: 1;
  }

  .cue {
    fill: none;
    stroke: #1a1ad6;
  }

  .cue-head {
    fill: #1a1ad6;
  }

  .crumbs {
    position: absolute;
    left: 10px;
    top: 32px;
    display: flex;
    align-items: center;
    gap: 1px;
    height: 19px;
    padding-left: 10px;
    border: 1px solid #dcdcdc;
    background: rgba(246, 246, 246, 0.8);
    font-size: 9px;
    font-weight: 500;
    color: #111;
  }

  .crumbs .icon {
    width: 14px;
    height: 14px;
    opacity: 0.8;
  }

  .wedge-mark {
    width: 8px;
    height: 19px;
    fill: none;
    stroke: #c9c9c9;
  }

  .crumbs span {
    margin: 0 2px 0 4px;
  }

  .picked {
    display: flex;
    align-items: center;
    justify-content: center;
    width: 34px;
    height: 19px;
    background: #c5dcec;
    clip-path: polygon(10px 0, 100% 0, 100% 100%, 0 100%);
  }

  .handle {
    position: absolute;
    left: 0;
    top: 254px;
    display: flex;
    align-items: center;
    justify-content: center;
    width: 7px;
    height: 34px;
    border: 1px solid #a5a5a5;
    border-left: 0;
    background: #f6f6f6;
  }

  /* arrows from the callout to the window */
  .pointers {
    position: absolute;
    left: 0;
    top: 0;
    width: 100%;
    height: 560px;
    pointer-events: none;
  }

  .line {
    fill: none;
    stroke: #5478b8;
    stroke-width: 1;
  }

  .head {
    fill: #4472c4;
  }
</style>
